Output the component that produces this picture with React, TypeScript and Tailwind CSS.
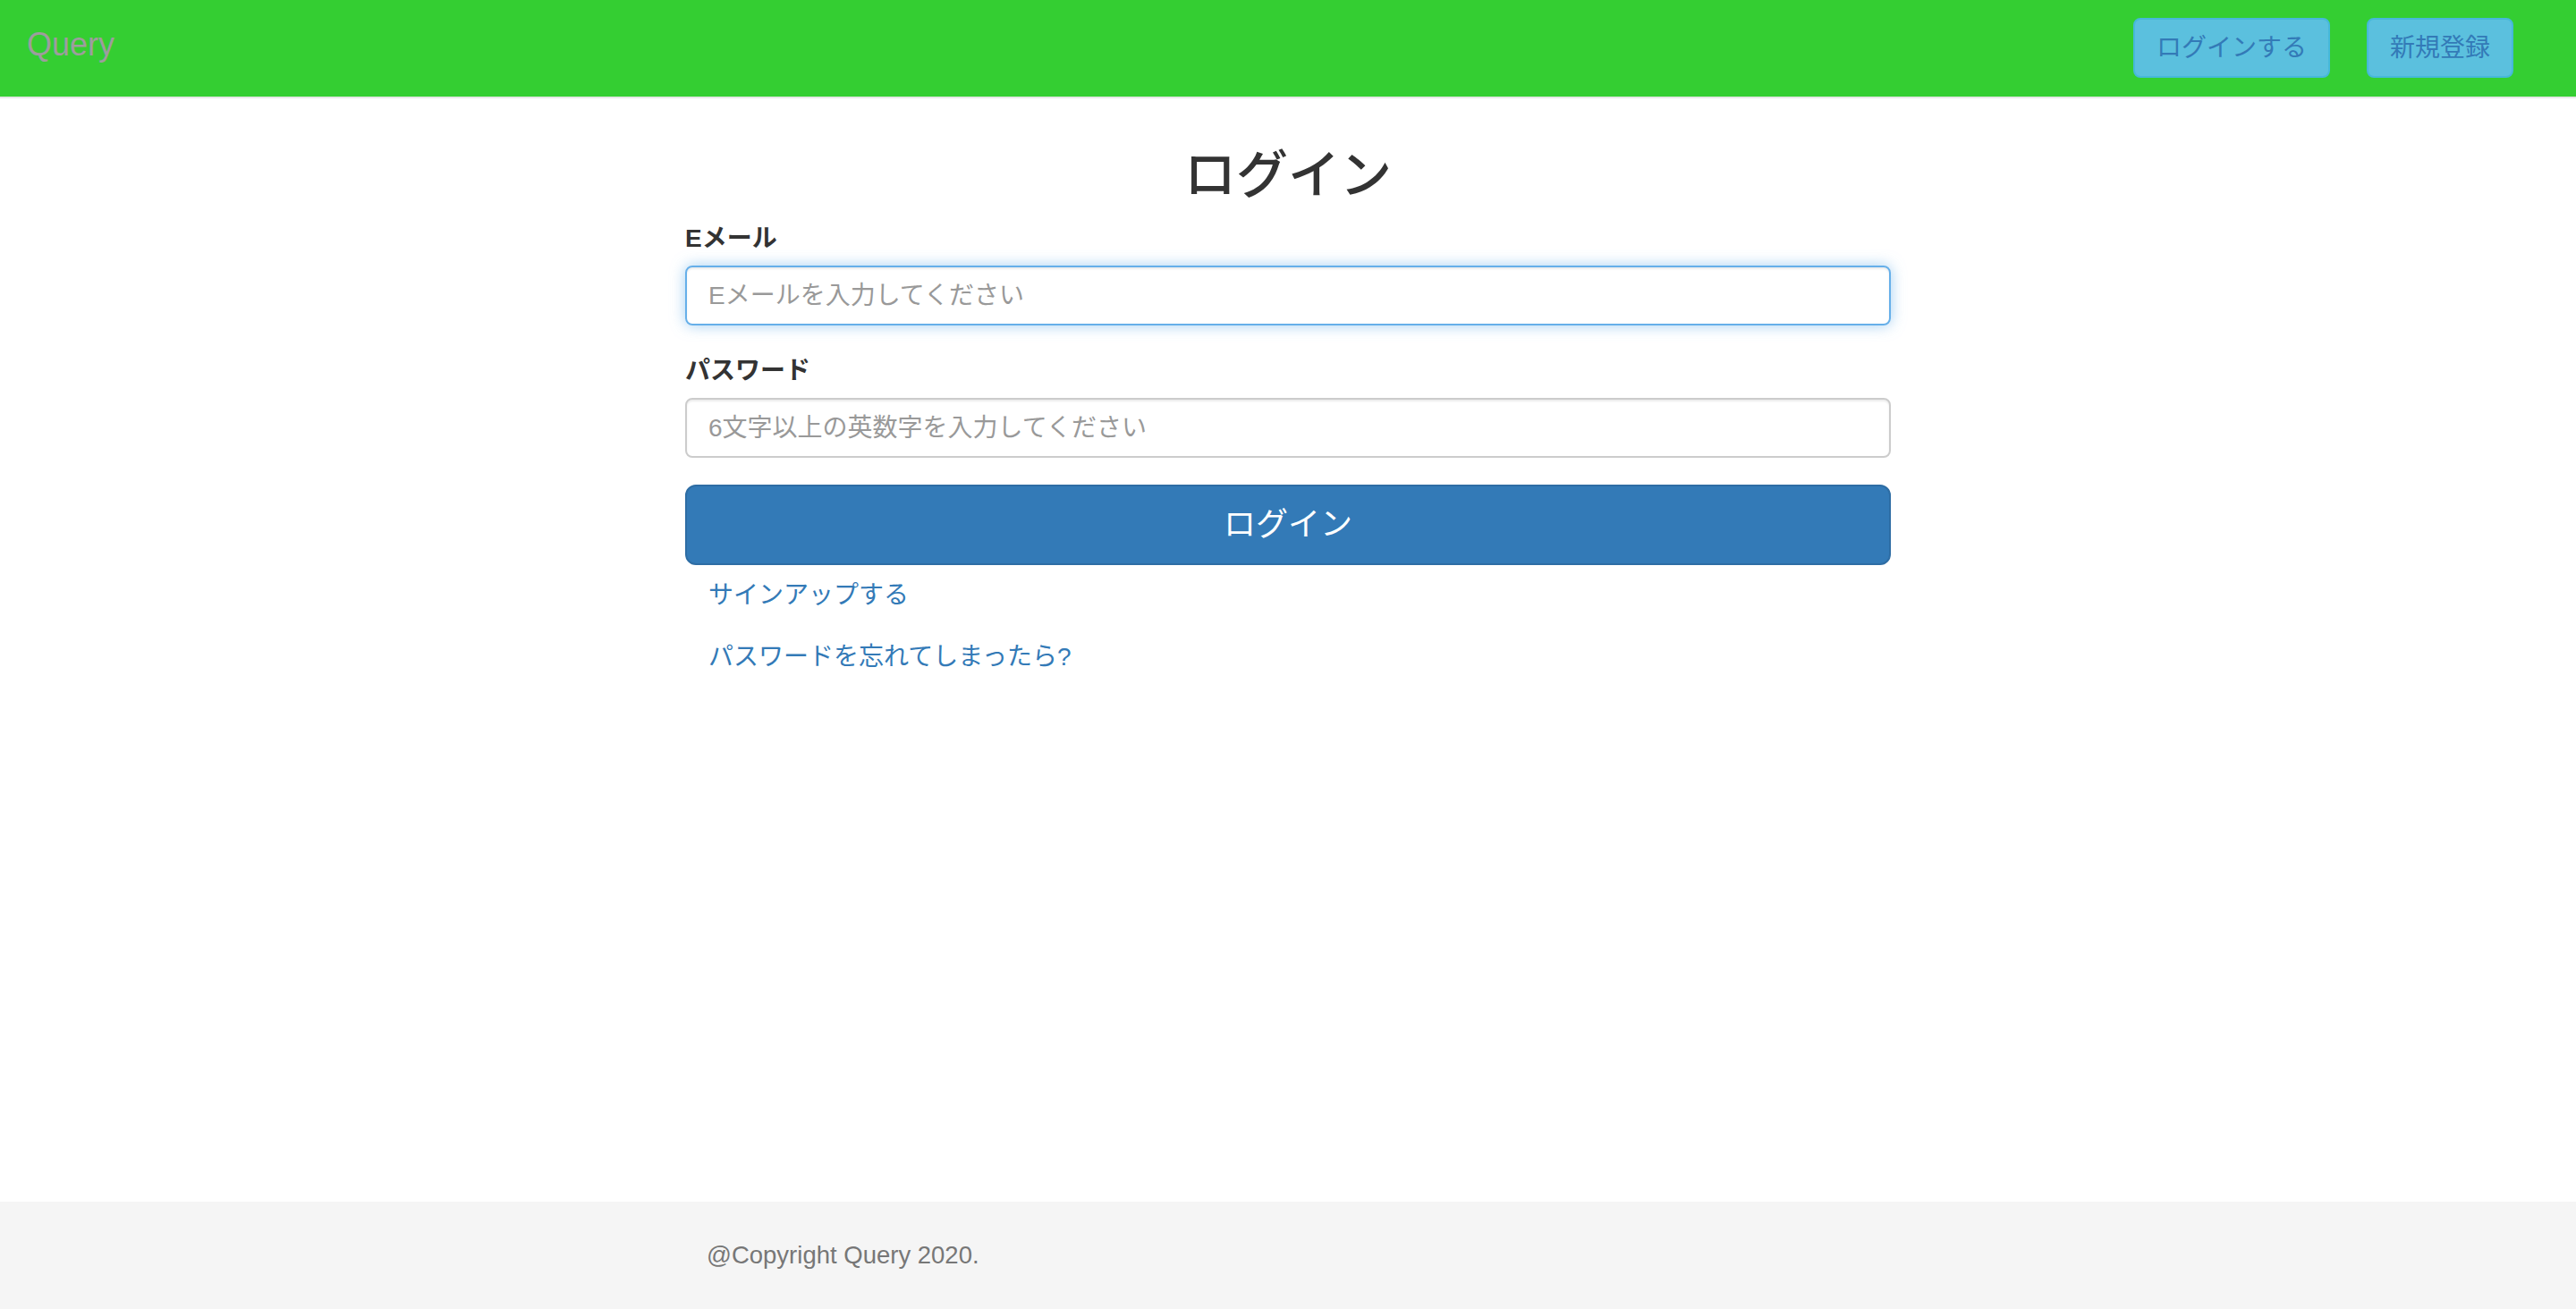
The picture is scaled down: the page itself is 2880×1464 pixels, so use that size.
import React from "react";

export default function App() {
  return (
    <div className="min-h-screen flex flex-col bg-white font-['Liberation_Sans','Noto_Sans_CJK_JP',sans-serif] text-[#333]">
      <header className="h-[110px] bg-[#34ce32] border-b-2 border-[#e7e7e7] flex items-start justify-between pl-[30px] pr-[70px] shrink-0">
        <a className="mt-[30px] text-[36px] leading-[40px] text-[#9d9d9d]">Query</a>
        <div className="flex items-start gap-[41px] mt-[20px]">
          <button className="h-[67px] px-[24px] rounded-[8px] bg-[#5bc0de] border-2 border-[#46b8da] text-[#337ab7] text-[28px] leading-[40px]">
            ログインする
          </button>
          <button className="h-[67px] px-[24px] rounded-[8px] bg-[#5bc0de] border-2 border-[#46b8da] text-[#337ab7] text-[28px] leading-[40px]">
            新規登録
          </button>
        </div>
      </header>

      <main className="flex-1">
        <div className="w-[1348px] mx-auto">
          <h2 className="mt-[53px] text-center text-[58px] leading-[66px] font-medium text-[#333]">ログイン</h2>
          <div className="mt-[18px]">
            <label className="block text-[28px] leading-[40px] font-bold">Eメール</label>
            <input
              className="mt-[10px] block w-full h-[67px] px-[24px] rounded-[8px] border-2 border-[#66afe9] text-[28px] outline-none shadow-[inset_0_2px_2px_rgba(0,0,0,0.075),0_0_16px_rgba(102,175,233,0.6)] placeholder:text-[#999]"
              placeholder="Eメールを入力してください"
            />
          </div>
          <div className="mt-[31px]">
            <label className="block text-[28px] leading-[40px] font-bold">パスワード</label>
            <input
              type="password"
              className="mt-[10px] block w-full h-[67px] px-[24px] rounded-[8px] border-2 border-[#ccc] text-[28px] outline-none shadow-[inset_0_2px_2px_rgba(0,0,0,0.075)] placeholder:text-[#999]"
              placeholder="6文字以上の英数字を入力してください"
            />
          </div>
          <button className="mt-[30px] block w-full h-[90px] rounded-[12px] bg-[#337ab7] border-2 border-[#2e6da4] text-white text-[36px] leading-[48px]">
            ログイン
          </button>
          <div className="mt-[14px] pl-[26px] flex flex-col gap-[29px]">
            <a className="text-[28px] leading-[40px] text-[#337ab7]">サインアップする</a>
            <a className="text-[28px] leading-[40px] text-[#337ab7]">パスワードを忘れてしまったら?</a>
          </div>
        </div>
      </main>

      <footer className="h-[120px] bg-[#f5f5f5] flex items-center shrink-0">
        <div className="w-[1348px] mx-auto pl-[24px]">
          <p className="text-[27.5px] leading-[40px] text-[#777]">@Copyright Query 2020.</p>
        </div>
      </footer>
    </div>
  );
}
